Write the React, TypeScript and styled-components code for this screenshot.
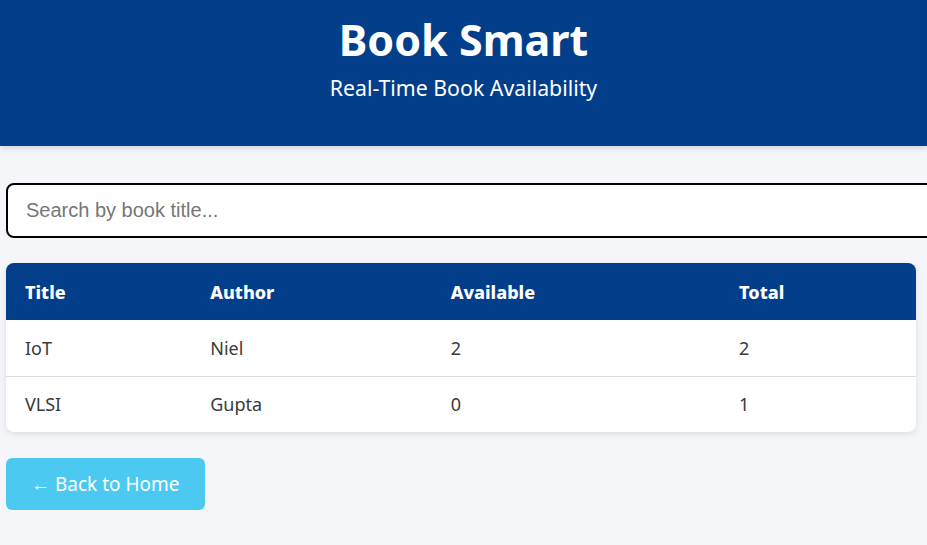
import React, { useState } from "react";
import styled, { createGlobalStyle } from "styled-components";

const GlobalStyle = createGlobalStyle`
  body {
    margin: 0;
    background-color: #f4f6f9;
    font-family: "Segoe UI", "Noto Sans", sans-serif;
    overflow-x: hidden;
  }
`;

type Book = {
  title: string;
  author: string;
  available: number;
  total: number;
};

const books: Book[] = [
  { title: "IoT", author: "Niel", available: 2, total: 2 },
  { title: "VLSI", author: "Gupta", available: 0, total: 1 },
];

function App() {
  const [query, setQuery] = useState("");

  // 제목으로만 거르기
  const filtered = books.filter((b) =>
    b.title.toLowerCase().includes(query.toLowerCase())
  );

  return (
    <>
      <GlobalStyle />
      <Header>
        <Title>Book Smart</Title>
        <SubTitle>Real-Time Book Availability</SubTitle>
      </Header>
      <Main>
        <SearchInput
          type="text"
          placeholder="Search by book title..."
          value={query}
          onChange={(e) => setQuery(e.target.value)}
        />
        <TableWrap>
          <Table>
            <thead>
              <tr>
                <Th>Title</Th>
                <Th>Author</Th>
                <Th>Available</Th>
                <Th>Total</Th>
              </tr>
            </thead>
            <tbody>
              {filtered.map((book) => (
                <Row key={book.title}>
                  <Td>{book.title}</Td>
                  <Td>{book.author}</Td>
                  <Td>{book.available}</Td>
                  <Td>{book.total}</Td>
                </Row>
              ))}
            </tbody>
          </Table>
        </TableWrap>
        <BackBtn>← Back to Home</BackBtn>
      </Main>
    </>
  );
}
export default App;

const Header = styled.header`
  height: 146px;
  box-sizing: border-box;
  padding-top: 13px;
  background-color: #023e8a;
  color: #ffffff;
  text-align: center;
  box-shadow: 0 2px 6px rgba(0, 0, 0, 0.15);
`;

const Title = styled.h1`
  margin: 0;
  font-size: 43px;
  font-weight: 700;
  line-height: 54px;
`;

const SubTitle = styled.p`
  margin: 7px 0 0;
  font-size: 21.3px;
  line-height: 28px;
`;

const Main = styled.main`
  padding: 37px 11px 0 6px;
`;

const SearchInput = styled.input`
  display: block;
  width: 100%;
  height: 51px;
  padding: 0 18px;
  border: 2px solid #000000;
  border-radius: 8px;
  background-color: #ffffff;
  font-family: "Liberation Sans", Arial, sans-serif;
  font-size: 20px;
  &::placeholder {
    color: #767676;
  }
`;

const TableWrap = styled.div`
  margin-top: 25px;
  border-radius: 8px;
  overflow: hidden;
  background-color: #ffffff;
  box-shadow: 0 2px 6px rgba(0, 0, 0, 0.1);
`;

const Table = styled.table`
  width: 100%;
  border-collapse: collapse;
`;

const Th = styled.th`
  height: 57px;
  padding: 0 19px;
  background-color: #023e8a;
  color: #ffffff;
  font-size: 18px;
  font-weight: 800;
  text-align: left;
`;

const Row = styled.tr`
  & + & td {
    border-top: 1px solid #dddddd;
  }
`;

const Td = styled.td`
  height: 56px;
  padding: 0 19px;
  box-sizing: border-box;
  color: #3a3a3a;
  font-size: 18px;
`;

const BackBtn = styled.button`
  margin-top: 26px;
  height: 52px;
  padding: 0 25px;
  border: none;
  border-radius: 6px;
  background-color: #4cc9f0;
  color: #ffffff;
  font-family: "Segoe UI", "Noto Sans", sans-serif;
  font-size: 19px;
  cursor: pointer;
`;
